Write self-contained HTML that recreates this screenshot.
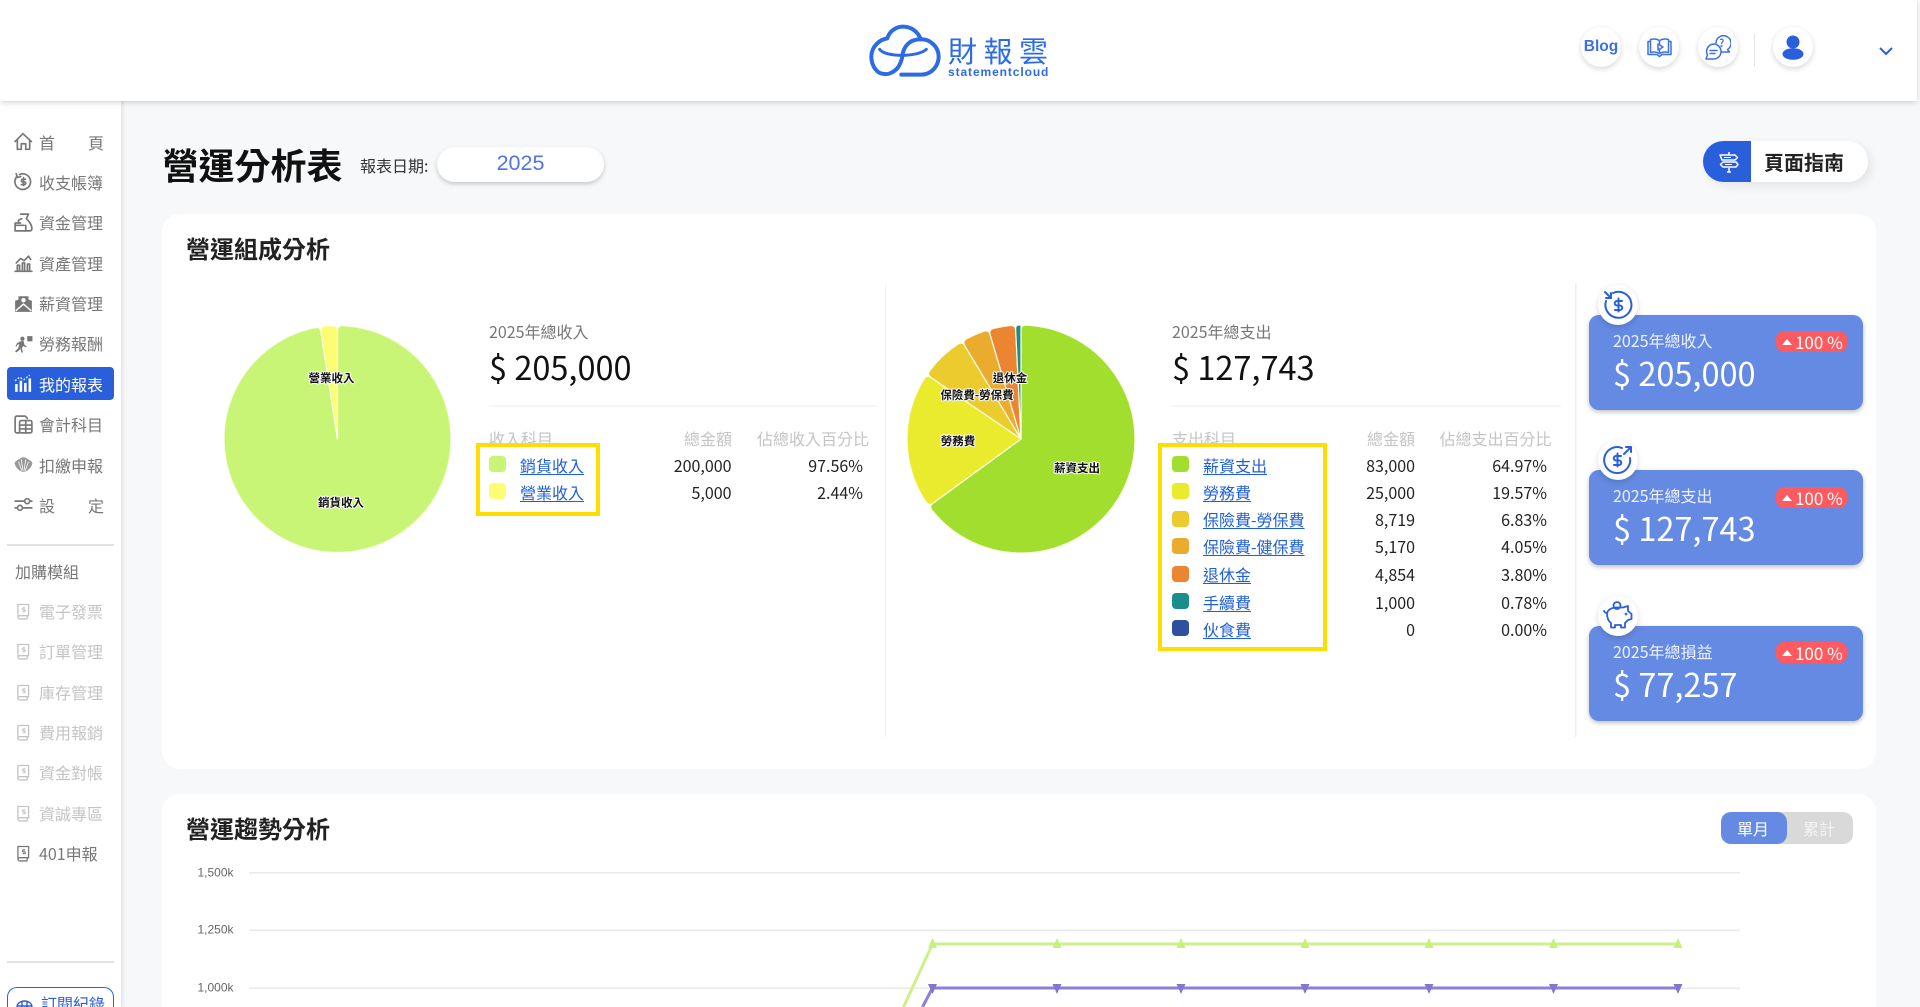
<!DOCTYPE html>
<html lang="zh-Hant"><head><meta charset="utf-8"><title>營運分析表</title>
<style>
*{box-sizing:border-box}
html,body{margin:0;padding:0;width:1920px;height:1007px;overflow:hidden;background:#f6f8fa;font-family:"Liberation Sans","Noto Sans CJK TC",sans-serif}
#w{position:absolute;left:0;top:0;width:1920px;height:1007px;overflow:hidden;background:#f6f8fa}
.a,.t{position:absolute}
.t{white-space:nowrap;font-family:"Noto Sans CJK TC","Liberation Sans",sans-serif;font-size:16px;line-height:24px;letter-spacing:0}
.r{text-align:right}
.si{left:39px;width:65px;color:#777}
.si.j{display:flex;justify-content:space-between}
.dis{color:#c4c4c4}
.lk{color:#1f5fd8;text-decoration:underline;text-underline-offset:2px}
.c{color:#222}
.h{color:#c4c4c4}
.sw{position:absolute;width:17px;height:16px;border-radius:4px}
.kpi{position:absolute;left:1589px;width:274px;height:95px;background:#648ae3;border-radius:10px;box-shadow:0 2px 5px rgba(0,0,0,.25)}
.bd{position:absolute;left:1776px;width:71px;height:21px;background:#ff5a5f;border-radius:8px}
.cir{position:absolute;width:40px;height:40px;border-radius:50%;background:#fff;box-shadow:0 2px 6px rgba(0,0,0,.16)}
.val{font-size:32.5px;line-height:44px;color:#fff;left:1613px}
.lab{color:#eef2fd;left:1613px}
.pc{color:#fff;font-size:17px;left:1795px;line-height:22px}
.tri{position:absolute;left:1782px;width:0;height:0;border-left:5px solid transparent;border-right:5px solid transparent;border-bottom:6px solid #fff}
.ico{position:absolute;fill:none;stroke:#777;stroke-width:1.5;stroke-linecap:round;stroke-linejoin:round}
svg text{font-family:"Noto Sans CJK TC","Liberation Sans",sans-serif}
</style></head><body>
<div id="w">

<svg width="0" height="0" style="position:absolute"><defs>
<symbol id="m" viewBox="0 0 14 18"><path d="M1 1.500h11.500v12H3.500A2.200 2.200 0 0 0 1 15.500zM1 15.500A2 2 0 0 0 3.500 17H11M11 13.500V17" fill="none" stroke="currentColor" stroke-width="1.400"/><path d="M7.500 4v6M9 5.200H6.700a1 1 0 0 0 0 2h1.400a1 1 0 0 1 0 2H6" fill="none" stroke="currentColor" stroke-width=".9"/></symbol>
</defs></svg>

<!-- main cards -->
<div class="a" style="left:162px;top:214px;width:1714px;height:555px;background:#fff;border-radius:18px"></div>
<div class="a" style="left:162px;top:794px;width:1714px;height:213px;background:#fff;border-radius:18px 18px 0 0"></div>

<!-- sidebar -->
<div class="a" style="left:0;top:0;width:121px;height:1007px;background:#fff;box-shadow:1px 0 5px rgba(0,0,0,.12)"></div>
<!-- header -->
<div class="a" style="left:1917px;top:0;width:3px;height:101px;background:#fff"></div>
<div class="a" style="left:0;top:0;width:1917px;height:101px;background:#fff;box-shadow:0 1px 6px rgba(0,0,0,.2)"></div>

<svg class="a" style="left:838px;top:0" width="240" height="100" viewBox="0 0 720 300" fill="none" stroke="#2d6be4" stroke-width="12" stroke-linecap="round" stroke-linejoin="round">
<path d="M178 205C165 218 150 224 140 222C115 222 100 195 100 170C100 140 125 118 148 115C155 92 175 80 195 80C220 80 240 95 248 118"/>
<path d="M190 224H250C280 224 302 198 302 170C302 140 275 115 245 118C215 118 195 140 193 170C191 180 188 192 178 205"/>
<path d="M125 148C140 172 240 172 265 148" stroke-width="9"/>
</svg>
<div class="t" style="left:948px;top:29px;font-size:29px;line-height:42px;letter-spacing:6.500px;color:#2d6be4">財報雲</div>
<div class="a" style="left:948px;top:64px;font-size:12px;line-height:16px;font-weight:bold;letter-spacing:.9px;color:#2d6be4;white-space:nowrap">statementcloud</div>

<div class="cir" style="left:1581px;top:27px"></div>
<div class="a" style="left:1581px;top:38px;width:40px;text-align:center;font-size:15.500px;line-height:17px;font-weight:bold;color:#3c70e6">Blog</div>
<div class="cir" style="left:1639px;top:27px"></div>
<svg class="a" style="left:1647px;top:38px" width="25" height="20" viewBox="0 0 25 20" fill="none" stroke="#3c70e6" stroke-width="1.500" stroke-linejoin="round"><path d="M3.500 3.500H1v13h9l2.500 2 2.500-2h9v-13h-2.500"/><path d="M3.500 1.500c3-.8 6.500-.5 9 1 2.500-1.500 6-1.800 9-1v13c-3-.8-6.500-.5-9 1-2.500-1.500-6-1.800-9-1z"/><path d="M12.500 2.500v13"/><path d="M11 6l5 3-5 3z" fill="#fff"/></svg>
<div class="cir" style="left:1698px;top:27px"></div>
<svg class="a" style="left:1705px;top:34px" width="26" height="27" viewBox="0 0 26 27" fill="none" stroke="#3c70e6" stroke-width="1.500" stroke-linejoin="round" stroke-linecap="round"><path d="M11 9a7.500 7.500 0 1 1 11.500 6.500l2 2.500H17"/><path d="M15.500 5.500a1.700 1.700 0 0 1 2.700 1.300c0 1.200-1.700 1.500-1.700 2.800" stroke-width="1.300"/><circle cx="16.500" cy="12" r=".4"/><path d="M9 10a7.500 7.500 0 0 0-6.500 11L1 25h8a7.500 7.500 0 0 0 7-8 7.500 7.500 0 0 0-7-7z" fill="#fff"/><path d="M5 16.500h7M5 19.500h5"/></svg>
<div class="a" style="left:1754px;top:34px;width:1px;height:33px;background:#e6e6e6"></div>
<div class="cir" style="left:1773px;top:27px"></div>
<svg class="a" style="left:1782px;top:34px" width="22" height="26" viewBox="0 0 22 26" fill="#2a5fdc"><circle cx="11" cy="8" r="6.500"/><ellipse cx="11" cy="20" rx="10.500" ry="5.800"/></svg>
<svg class="a" style="left:1878px;top:46px" width="16" height="10" viewBox="0 0 16 10" fill="none" stroke="#2a5fdc" stroke-width="2"><path d="M2 2l6 6 6-6"/></svg>

<!-- sidebar menu -->
<div class="t si j" style="top:130px"><span>首</span><span>頁</span></div>
<div class="t si" style="top:170px">收支帳簿</div>
<div class="t si" style="top:210px">資金管理</div>
<div class="t si" style="top:251px">資產管理</div>
<div class="t si" style="top:291px">薪資管理</div>
<div class="t si" style="top:331px">勞務報酬</div>
<div class="a" style="left:7px;top:367px;width:107px;height:33px;background:#2a5fdc;border-radius:4px"></div>
<div class="t si" style="top:372px;color:#fff">我的報表</div>
<div class="t si" style="top:412px">會計科目</div>
<div class="t si" style="top:453px">扣繳申報</div>
<div class="t si j" style="top:493px"><span>設</span><span>定</span></div>

<svg class="ico" style="left:14px;top:132px" width="19" height="19" viewBox="0 0 17 17"><path d="M1 8.500L8 1.500l7.500 7M3 7v8.500h3.500v-5h4v5H14V7"/></svg>
<svg class="ico" style="left:14px;top:172px" width="19" height="19" viewBox="0 0 17 17"><path d="M5 2.200a7 7 0 1 1-3 2.500M2 1.500l1 3.500 3-1"/><path d="M8.500 5v7M10.300 6.500H7.800a1.200 1.200 0 0 0 0 2.400h1.500a1.200 1.200 0 0 1 0 2.400H6.700"/></svg>
<svg class="ico" style="left:14px;top:213px" width="19" height="19" viewBox="0 0 17 17"><path d="M6 1h7l-2 4c2 2 5 5 5 9 0 1.500-1 2-2 2H1V9h5"/><path d="M1 11h8M4 9V6.500L7 5M10.500 11v5"/></svg>
<svg class="ico" style="left:14px;top:254px" width="19" height="19" viewBox="0 0 17 17"><path d="M1 15.500h15M3 15V10h2v5M7.500 15V8h2v7M12 15V9h2v6M2 8l4-4 3 2 4-4 2 3"/></svg>
<svg class="a" style="left:14px;top:294px" width="19" height="19" viewBox="0 0 17 17" fill="#777"><path d="M1 6l3-1V2h9v3l3 1v10H1z"/><path d="M1.500 15L8.500 9l7 6" fill="none" stroke="#fff" stroke-width="1.300"/><circle cx="8.500" cy="5.500" r="2" fill="#fff"/></svg>
<svg class="a" style="left:14px;top:335px" width="19" height="18" viewBox="0 0 18 17" fill="#777"><circle cx="8" cy="3.500" r="2"/><path d="M6 6l3-.5 1 4 2 1-.5 1-3-1-1 2 1 4H7l-1-4-1 2-3 2-1-1 3-3 1-4-2 1-1 2-.5-.5 1-3z"/><rect x="12.500" y="1" width="5" height="5" rx=".5"/></svg>
<svg class="a" style="left:14px;top:374px" width="19" height="19" viewBox="0 0 17 17" fill="#fff"><rect x="1" y="9" width="2.300" height="7"/><rect x="5" y="6" width="2.300" height="10"/><rect x="9" y="8" width="2.300" height="8"/><rect x="13" y="4" width="2.300" height="12"/><path d="M1 6l4-3 4 2 5-4" fill="none" stroke="#fff" stroke-width="1.200" stroke-dasharray="1.500 1.500"/></svg>
<svg class="ico" style="left:14px;top:415px" width="19" height="19" viewBox="0 0 17 17"><path d="M5 16H2.500A1.500 1.500 0 0 1 1 14.500v-12A1.500 1.500 0 0 1 2.500 1H10l2 2"/><rect x="5" y="5" width="11" height="11" rx="1.500"/><path d="M5 9h11M5 12.500h11M10.500 5v11"/></svg>
<svg class="a" style="left:14px;top:456px" width="19" height="17" viewBox="0 0 17 15" fill="#999"><path d="M8.500 14C5 14 1 10 .5 6 2 4 4 3 5 2.500 6 1.500 7.500 1 8.500 1s2.500.5 3.500 1.500c1 .5 3 1.500 4.500 3.500-.5 4-4.500 8-8 8z"/><path d="M4 5l3 8M6.500 3l1.500 10M10.500 3L9 13M13 5l-3 8" fill="none" stroke="#fff" stroke-width=".7"/></svg>
<svg class="ico" style="left:14px;top:496px" width="19" height="17" viewBox="0 0 17 15"><path d="M1 4.500h8.500M14 4.500h2M1 10.500h2M8 10.500h8"/><circle cx="11.800" cy="4.500" r="2.200"/><circle cx="5.300" cy="10.500" r="2.200"/></svg>

<div class="a" style="left:7px;top:544px;width:107px;height:2px;background:#e2e2e2"></div>
<div class="t" style="left:15px;top:559px;color:#777">加購模組</div>
<div class="t si dis" style="top:599px">電子發票</div>
<div class="t si dis" style="top:639px">訂單管理</div>
<div class="t si dis" style="top:680px">庫存管理</div>
<div class="t si dis" style="top:720px">費用報銷</div>
<div class="t si dis" style="top:760px">資金對帳</div>
<div class="t si dis" style="top:801px">資誠專區</div>
<div class="t si" style="top:841px">401申報</div>
<svg class="a" style="left:17px;top:603px;color:#c4c4c4" width="13" height="17"><use href="#m"/></svg>
<svg class="a" style="left:17px;top:643px;color:#c4c4c4" width="13" height="17"><use href="#m"/></svg>
<svg class="a" style="left:17px;top:684px;color:#c4c4c4" width="13" height="17"><use href="#m"/></svg>
<svg class="a" style="left:17px;top:724px;color:#c4c4c4" width="13" height="17"><use href="#m"/></svg>
<svg class="a" style="left:17px;top:764px;color:#c4c4c4" width="13" height="17"><use href="#m"/></svg>
<svg class="a" style="left:17px;top:805px;color:#c4c4c4" width="13" height="17"><use href="#m"/></svg>
<svg class="a" style="left:17px;top:845px;color:#777" width="13" height="17"><use href="#m"/></svg>
<div class="a" style="left:7px;top:961px;width:107px;height:2px;background:#e2e2e2"></div>
<div class="a" style="left:7px;top:987px;width:107px;height:20px;border:1.500px solid #2a5fdc;border-bottom:0;border-radius:10px 10px 0 0;background:#fff"></div>
<div class="t" style="left:41px;top:991px;height:16px;line-height:24px;overflow:hidden;color:#2a5fdc">訂閱紀錄</div>
<svg class="a" style="left:16px;top:1000px" width="17" height="7" viewBox="0 0 17 7" fill="none" stroke="#2a5fdc" stroke-width="1.400"><path d="M1 7a7.500 6 0 0 1 15 0M1 6h15M6 2v5M11 2v5"/></svg>

<!-- page title -->
<div class="t" style="left:162.500px;top:139px;font-size:36px;line-height:50px;font-weight:bold;color:#111">營運分析表</div>
<div class="t" style="left:360px;top:153px;color:#333">報表日期:</div>
<div class="a" style="left:437px;top:147px;width:167px;height:35px;background:#fff;border-radius:18px;box-shadow:0 2px 5px rgba(0,0,0,.2)"></div>
<div class="a" style="left:437px;top:150px;width:167px;text-align:center;font-size:21.500px;line-height:27px;color:#4d74e8">2025</div>

<div class="a" style="left:1703px;top:141px;width:165px;height:41px;background:#fff;border-radius:21px;box-shadow:4px 4px 10px rgba(0,0,0,.08)"></div>
<div class="a" style="left:1703px;top:141px;width:48px;height:41px;background:#2a5fdc;border-radius:21px 0 0 21px"></div>
<svg class="a" style="left:1719px;top:151px" width="20" height="22" viewBox="0 0 20 22" fill="none" stroke="#fff" stroke-width="1.500" stroke-linejoin="round"><path d="M10 1v3M10 17v4M8 21h4"/><path d="M1 4h15l2.500 2.500L16 9H3z"/><path d="M4 11h13l2 2.500L17 16H4l-2.500-2.500z"/><path d="M5 6.500h7M6 13.500h7" stroke-width="1"/></svg>
<div class="t" style="left:1764px;top:147px;font-size:20px;line-height:30px;font-weight:bold;color:#222">頁面指南</div>

<div class="t" style="left:186px;top:230px;font-size:24px;line-height:36px;font-weight:bold;color:#222">營運組成分析</div>

<!-- pies -->
<svg class="a" style="left:0;top:0" width="1920" height="1007" font-size="11.500" font-weight="bold" fill="#111">
<g stroke="#fdfde8" stroke-width="1.200" stroke-linejoin="round">
<g transform="translate(-1 0)">
<path fill="#c9f577" d="M338.500 439L338.500 330.500Q338.500 325.500 343.450 325.610A113.500 113.500 0 1 1 316.260 327.700Q321.140 326.840 321.900 331.800Z"/>
<path fill="#fdfd74" d="M338.500 439L321.900 331.800Q321.140 326.840 325 326Q329.800 325.300 334 326Q338.500 325.500 338.500 330.500Z"/>
</g>
<g transform="translate(-2 0)">
<path fill="#a2de2e" d="M1023 439L1023 330Q1023 325 1027.970 325.110A114 114 0 1 1 933.910 510.120Q930.890 506.170 934.930 503.220Z"/>
<path fill="#ebeb2e" d="M1023 439L934.930 503.220Q930.890 506.170 928.050 502.090A114 114 0 0 1 926.170 378.840Q928.870 374.690 933 377.510Z"/>
<path fill="#eccb2f" d="M1023 439L933 377.510Q928.870 374.690 931.800 370.620A114 114 0 0 1 959.980 344Q964.190 341.350 966.770 345.630Z"/>
<path fill="#ebab2e" d="M1023 439L966.770 345.630Q964.190 341.350 968.500 338.870A114 114 0 0 1 985.920 331.200Q990.660 329.690 992.080 334.480Z"/>
<path fill="#ec8532" d="M1023 439L992.080 334.480Q990.660 329.690 995.460 328.370A114 114 0 0 1 1012.470 325.490Q1017.430 325.140 1017.670 330.130Z"/>
<path fill="#1a8e8a" d="M1023 439L1017.670 330.130Q1017.430 325.140 1020 325L1023 325Z"/>
</g>
</g>
<g text-anchor="middle" stroke="#fff" stroke-width="2" paint-order="stroke" stroke-linejoin="round">
<text x="331.500" y="382">營業收入</text>
<text x="341" y="506.500">銷貨收入</text>
<text x="1077" y="472">薪資支出</text>
<text x="958" y="445">勞務費</text>
<text x="977" y="399">保險費-勞保費</text>
<text x="1010" y="382">退休金</text>
</g>
<!-- dividers -->
<rect x="885" y="285" width="1" height="452" fill="#eee"/>
<rect x="1575" y="283" width="1.500" height="454" fill="#eee"/>
<rect x="489" y="405.500" width="388" height="1" fill="#eee"/>
<rect x="1172" y="405.500" width="389" height="1" fill="#eee"/>
<!-- chart -->
<g fill="#eaeaea"><rect x="249" y="872" width="1491" height="1.500"/><rect x="249" y="929.500" width="1491" height="1.500"/><rect x="249" y="987.500" width="1491" height="1.500"/></g>
<g font-size="12" font-weight="normal" fill="#666" text-anchor="end">
<text x="233.500" y="876.500" style="font-family:'Liberation Sans',sans-serif">1,500k</text>
<text x="233.500" y="933.500" style="font-family:'Liberation Sans',sans-serif">1,250k</text>
<text x="233.500" y="991.500" style="font-family:'Liberation Sans',sans-serif">1,000k</text>
</g>
<path d="M903.500 1007L932.500 944H1678" fill="none" stroke="#cdf08a" stroke-width="3"/>
<path d="M922.500 1007L932.500 988H1678" fill="none" stroke="#8f7fd6" stroke-width="3"/>
<g fill="#c5f07a">
<path d="M932.500 938l4.500 10h-9z"/><path d="M1057 938l4.500 10h-9z"/><path d="M1181 938l4.500 10h-9z"/><path d="M1305 938l4.500 10h-9z"/><path d="M1429 938l4.500 10h-9z"/><path d="M1553.500 938l4.500 10h-9z"/><path d="M1678 938l4.500 10h-9z"/></g>
<g fill="#8574d0">
<path d="M932.500 994l4.500-10h-9z"/><path d="M1057 994l4.500-10h-9z"/><path d="M1181 994l4.500-10h-9z"/><path d="M1305 994l4.500-10h-9z"/><path d="M1429 994l4.500-10h-9z"/><path d="M1553.500 994l4.500-10h-9z"/><path d="M1678 994l4.500-10h-9z"/></g>
</svg>

<!-- income table -->
<div class="t" style="left:489px;top:319px;color:#777">2025年總收入</div>
<div class="t" style="left:489px;top:345px;font-size:32.500px;line-height:44px;color:#111">$ 205,000</div>
<div class="t h" style="left:489px;top:426px">收入科目</div>
<div class="t h r" style="left:632px;top:426px;width:100px">總金額</div>
<div class="t h" style="left:757px;top:426px">佔總收入百分比</div>
<div class="a" style="left:476px;top:443px;width:124px;height:73px;border:4px solid #ffdd00"></div>
<div class="sw" style="left:489px;top:456px;background:#c9f577"></div>
<div class="sw" style="left:489px;top:483px;background:#fdfd74"></div>
<div class="t lk" style="left:520px;top:453px">銷貨收入</div>
<div class="t lk" style="left:520px;top:480px">營業收入</div>
<div class="t c r" style="left:631.500px;top:453px;width:100px">200,000</div>
<div class="t c r" style="left:631.500px;top:480px;width:100px">5,000</div>
<div class="t c r" style="left:763px;top:453px;width:100px">97.56%</div>
<div class="t c r" style="left:763px;top:480px;width:100px">2.44%</div>

<!-- expense table -->
<div class="t" style="left:1172px;top:319px;color:#777">2025年總支出</div>
<div class="t" style="left:1172px;top:345px;font-size:32.500px;line-height:44px;color:#111">$ 127,743</div>
<div class="t h" style="left:1172px;top:426px">支出科目</div>
<div class="t h r" style="left:1315px;top:426px;width:100px">總金額</div>
<div class="t h" style="left:1439.500px;top:426px">佔總支出百分比</div>
<div class="a" style="left:1158px;top:443px;width:169px;height:208px;border:4px solid #ffdd00"></div>

<div class="sw" style="left:1172px;top:456px;background:#a2de2e"></div>
<div class="sw" style="left:1172px;top:483px;background:#ebeb2e"></div>
<div class="sw" style="left:1172px;top:511px;background:#eccb2f"></div>
<div class="sw" style="left:1172px;top:538px;background:#ebab2e"></div>
<div class="sw" style="left:1172px;top:566px;background:#ec8532"></div>
<div class="sw" style="left:1172px;top:593px;background:#1a8e8a"></div>
<div class="sw" style="left:1172px;top:620px;background:#2f4f9f"></div>
<div class="t lk" style="left:1203px;top:453px">薪資支出</div>
<div class="t lk" style="left:1203px;top:480px">勞務費</div>
<div class="t lk" style="left:1203px;top:507px">保險費-勞保費</div>
<div class="t lk" style="left:1203px;top:534px">保險費-健保費</div>
<div class="t lk" style="left:1203px;top:562px">退休金</div>
<div class="t lk" style="left:1203px;top:590px">手續費</div>
<div class="t lk" style="left:1203px;top:617px">伙食費</div>
<div class="t c r" style="left:1315px;top:453px;width:100px">83,000</div>
<div class="t c r" style="left:1315px;top:480px;width:100px">25,000</div>
<div class="t c r" style="left:1315px;top:507px;width:100px">8,719</div>
<div class="t c r" style="left:1315px;top:534px;width:100px">5,170</div>
<div class="t c r" style="left:1315px;top:562px;width:100px">4,854</div>
<div class="t c r" style="left:1315px;top:590px;width:100px">1,000</div>
<div class="t c r" style="left:1315px;top:617px;width:100px">0</div>
<div class="t c r" style="left:1447px;top:453px;width:100px">64.97%</div>
<div class="t c r" style="left:1447px;top:480px;width:100px">19.57%</div>
<div class="t c r" style="left:1447px;top:507px;width:100px">6.83%</div>
<div class="t c r" style="left:1447px;top:534px;width:100px">4.05%</div>
<div class="t c r" style="left:1447px;top:562px;width:100px">3.80%</div>
<div class="t c r" style="left:1447px;top:590px;width:100px">0.78%</div>
<div class="t c r" style="left:1447px;top:617px;width:100px">0.00%</div>

<!-- KPI -->
<div class="kpi" style="top:315px"></div><div class="kpi" style="top:470px"></div><div class="kpi" style="top:626px"></div>
<div class="cir" style="left:1598px;top:285px"></div>
<div class="cir" style="left:1598px;top:440px"></div>
<div class="cir" style="left:1598px;top:596px"></div>
<svg class="a" style="left:1603px;top:290px" width="30" height="30" viewBox="0 0 30 30" fill="none" stroke="#2a5fdc" stroke-width="2" stroke-linecap="round" stroke-linejoin="round"><path d="M10 3a13 13 0 1 1-7 8M2 2l6 6M8 3v5H3"/><path d="M15.500 8.500v13M19 11h-5a2.200 2.200 0 0 0 0 4.500h3a2.200 2.200 0 0 1 0 4.500h-5"/></svg>
<svg class="a" style="left:1603px;top:445px" width="30" height="30" viewBox="0 0 30 30" fill="none" stroke="#2a5fdc" stroke-width="2" stroke-linecap="round" stroke-linejoin="round"><path d="M19 3a13 13 0 1 0 8 10M21 9l7-7M23 2h5v5"/><path d="M14.500 8.500v13M18 11h-5a2.200 2.200 0 0 0 0 4.500h3a2.200 2.200 0 0 1 0 4.500h-5"/></svg>
<svg class="a" style="left:1603px;top:601px" width="30" height="30" viewBox="0 0 30 30" fill="none" stroke="#2a5fdc" stroke-width="1.800" stroke-linecap="round" stroke-linejoin="round"><path d="M1 10c1 2 2 2 3 2 1-3 4-5 8-5.500h8L25 5v5l3.500 3v5l-3.500 1-3 3v4.500h-4V24h-6v2.500H8V22c-3-2-4-5-4-10"/><circle cx="14" cy="4.500" r="3.500"/><circle cx="23" cy="13" r=".5"/></svg>
<div class="t lab" style="top:328px">2025年總收入</div>
<div class="t lab" style="top:483px">2025年總支出</div>
<div class="t lab" style="top:639px">2025年總損益</div>
<div class="t val" style="top:351px">$ 205,000</div>
<div class="t val" style="top:506px">$ 127,743</div>
<div class="t val" style="top:662px">$ 77,257</div>
<div class="bd" style="top:331px"></div><div class="bd" style="top:487px"></div><div class="bd" style="top:642px"></div>
<div class="tri" style="top:339px"></div><div class="tri" style="top:495px"></div><div class="tri" style="top:650px"></div>
<div class="t pc" style="top:331px">100 %</div>
<div class="t pc" style="top:487px">100 %</div>
<div class="t pc" style="top:642px">100 %</div>

<!-- trend card head -->
<div class="t" style="left:186px;top:810px;font-size:24px;line-height:36px;font-weight:bold;color:#222">營運趨勢分析</div>
<div class="a" style="left:1721px;top:812px;width:132px;height:32px;background:#d9d9d9;border-radius:10px"></div>
<div class="a" style="left:1721px;top:812px;width:66px;height:32px;background:#648ae3;border-radius:10px"></div>
<div class="t" style="left:1720px;top:816px;width:66px;text-align:center;color:#fff">單月</div>
<div class="t" style="left:1786px;top:816px;width:66px;text-align:center;color:#f3f3f3">累計</div>

</div>
</body></html>
